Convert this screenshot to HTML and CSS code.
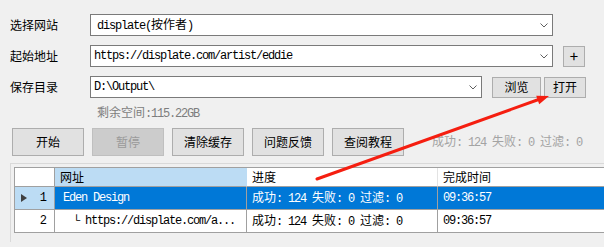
FILE: index.html
```html
<!DOCTYPE html>
<html lang="zh-CN">
<head>
    <meta charset="UTF-8">
    <title>Displate 下载器</title>
    <link rel="stylesheet" href="styles.css">
</head>
<body>
    <div class="app">
        <div class="row">
            <label class="label">选择网站</label>
            <div class="combo combo-list wide">
                <span class="mono">displate(<span class="cjk">按作者</span>)</span>
                <svg class="chev" width="8" height="5" viewBox="0 0 8 5"><polyline points="0.5,0.5 4,4 7.5,0.5"/></svg>
            </div>
        </div>

        <div class="row">
            <label class="label">起始地址</label>
            <div class="combo wide">
                <span class="mono">https://displate.com/artist/eddie</span>
                <svg class="chev" width="8" height="5" viewBox="0 0 8 5"><polyline points="0.5,0.5 4,4 7.5,0.5"/></svg>
            </div>
            <button class="btn btn-plus">+</button>
        </div>

        <div class="row row-dir">
            <label class="label">保存目录</label>
            <div class="combo narrow">
                <span class="mono">D:\Output\</span>
                <svg class="chev" width="8" height="5" viewBox="0 0 8 5"><polyline points="0.5,0.5 4,4 7.5,0.5"/></svg>
            </div>
            <button class="btn btn-browse">浏览</button>
            <button class="btn btn-open">打开</button>
        </div>

        <div class="free mono"><span class="cjk">剩余空间</span>:115.22GB</div>

        <div class="actions">
            <button class="btn btn-action">开始</button>
            <button class="btn btn-action" disabled>暂停</button>
            <button class="btn btn-action">清除缓存</button>
            <button class="btn btn-action">问题反馈</button>
            <button class="btn btn-action">查阅教程</button>
            <span class="status mono"><span class="cjk">成功</span>: 124 <span class="cjk">失败</span>: 0 <span class="cjk">过滤</span>: 0</span>
        </div>

        <div class="panel">
            <div class="grid">
                <div class="cell head corner"></div>
                <div class="cell head current"><span>网址</span></div>
                <div class="cell head"><span>进度</span></div>
                <div class="cell head"><span>完成时间</span></div>

                <div class="cell rowhead current"><span class="pointer"></span><span>1</span></div>
                <div class="cell sel url"><span class="mono">Eden Design</span></div>
                <div class="cell sel"><span class="mono"><span class="cjk">成功</span>: 124 <span class="cjk">失败</span>: 0 <span class="cjk">过滤</span>: 0</span></div>
                <div class="cell sel"><span class="mono">09:36:57</span></div>

                <div class="cell rowhead"><span>2</span></div>
                <div class="cell url child"><span class="mono">└ https://displate.com/a...</span></div>
                <div class="cell"><span class="mono"><span class="cjk">成功</span>: 124 <span class="cjk">失败</span>: 0 <span class="cjk">过滤</span>: 0</span></div>
                <div class="cell"><span class="mono">09:36:57</span></div>
            </div>
        </div>
    </div>

    <!-- annotation drawn over the screenshot -->
    <svg class="arrow" width="604" height="247" viewBox="0 0 604 247">
        <line x1="317" y1="179" x2="540" y2="99"/>
        <polygon points="549,96 539.2,104.2 536.2,95.8"/>
    </svg>
</body>
</html>
```

FILE: styles.css
```css
* {
    margin: 0;
    padding: 0;
    box-sizing: border-box;
}

body {
    width: 604px;
    height: 247px;
    overflow: hidden;
    position: relative;
    background: #f0f0f0;
    font-family: "Noto Sans CJK SC", sans-serif;
    font-size: 12px;
    line-height: 14px;
    color: #000;
}

.app {
    padding: 14px 0 0 10px;
}

.mono {
    font-family: "Liberation Mono", "Noto Sans CJK SC", monospace;
    font-size: 12px;
    letter-spacing: -1.2px;
}

.cjk {
    font-family: "Noto Sans CJK SC", sans-serif;
    font-size: 12px;
    letter-spacing: 0;
}

.row {
    display: flex;
    align-items: center;
    height: 22px;
    margin-bottom: 9px;
}

.row-dir {
    margin-bottom: 0;
}

.label {
    width: 80px;
}

.combo {
    height: 22px;
    border: 1px solid #7a7a7a;
    background: #fff;
    display: flex;
    align-items: center;
    justify-content: space-between;
    padding: 0 4px 0 3px;
    white-space: nowrap;
}

.combo-list {
    padding-left: 6px;
}

.wide {
    width: 463px;
}

.narrow {
    width: 392px;
}

.chev polyline {
    fill: none;
    stroke: #606060;
    stroke-width: 1;
}

.btn {
    font-family: "Noto Sans CJK SC", sans-serif;
    font-size: 12px;
    line-height: 14px;
    color: #000;
    background: #e1e1e1;
    border: 1px solid #adadad;
    display: flex;
    align-items: center;
    justify-content: center;
}

.btn:disabled {
    background: #cccccc;
    border-color: #bfbfbf;
    color: #9a9a9a;
}

.btn-plus {
    width: 22px;
    height: 21px;
    margin-left: 10px;
    font-size: 15px;
}

.btn-browse {
    width: 49px;
    height: 21px;
    margin-left: 10px;
}

.btn-open {
    width: 42px;
    height: 21px;
    margin-left: 3px;
}

.free {
    margin: 7px 0 0 87px;
    color: #7d7d7d;
}

.actions {
    display: flex;
    align-items: center;
    margin-top: 7px;
    padding-left: 2px;
    gap: 8px;
}

.btn-action {
    width: 72px;
    height: 28px;
}

.status {
    margin-left: 20px;
    color: #a3a3a3;
    white-space: nowrap;
}

.panel {
    margin-top: 7px;
    height: 79px;
    overflow: hidden;
    border: 1px solid #d9d9d9;
    border-right: none;
    border-bottom: none;
    padding: 3px 0 0 3px;
}

.grid {
    display: grid;
    grid-template-columns: 40px 192px 191px 1fr;
    grid-template-rows: 19px 23px 23px;
    border-left: 1px solid #a0a0a0;
    border-top: 1px solid #a0a0a0;
}

.cell {
    display: flex;
    align-items: center;
    white-space: nowrap;
    overflow: hidden;
    background: #fff;
    border-right: 1px solid #a0a0a0;
    border-bottom: 1px solid #a0a0a0;
    padding-left: 5px;
}

.cell:nth-child(4n) {
    border-right: none;
}

.head {
    border-right-color: #e3e3e3;
}

.head.corner {
    border-right-color: #a0a0a0;
}

.head.current {
    background: #bcdcf4;
    border-right-color: #bcdcf4;
}

.rowhead {
    justify-content: flex-end;
    padding-right: 7px;
    position: relative;
    font-family: "Liberation Mono", monospace;
    font-size: 12px;
}

.rowhead.current {
    background: #bcdcf4;
}

.pointer {
    position: absolute;
    left: 6px;
    top: 7px;
    border-left: 6px solid #404040;
    border-top: 4px solid transparent;
    border-bottom: 4px solid transparent;
}

.sel {
    background: #0078d7;
    color: #fff;
}

.url {
    padding-left: 8px;
}

.url.child {
    padding-left: 18px;
}

.arrow {
    position: absolute;
    top: 0;
    left: 0;
    pointer-events: none;
}

.arrow line {
    stroke: #f51e10;
    stroke-width: 3;
    stroke-linecap: round;
}

.arrow polygon {
    fill: #f51e10;
}
```
